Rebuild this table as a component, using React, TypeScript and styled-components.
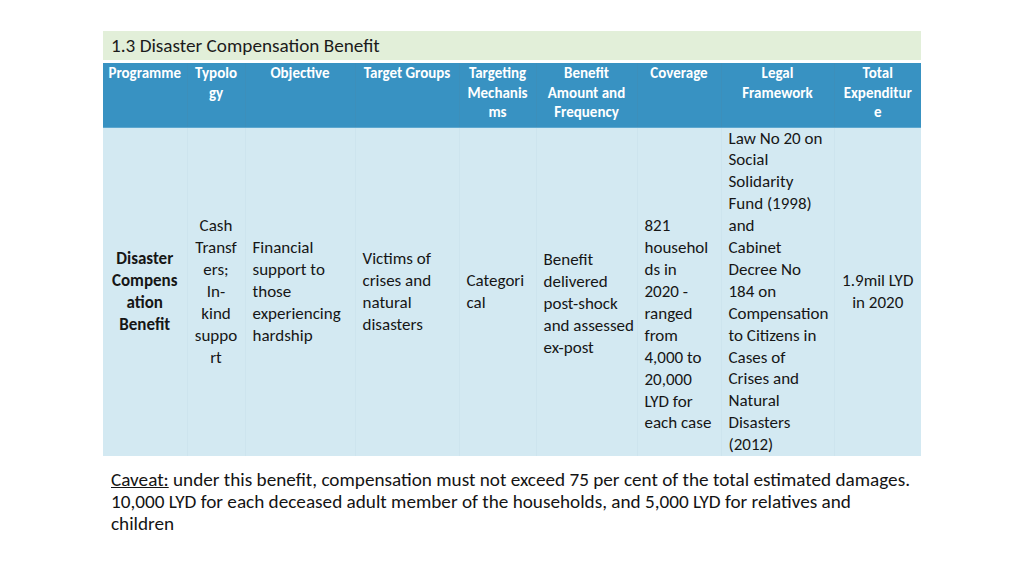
import React from "react";
import styled, { createGlobalStyle } from "styled-components";

const Global = createGlobalStyle`
  html, body { margin: 0; padding: 0; background: #ffffff; }
  body { font-family: Carlito, Lato, "Open Sans", sans-serif; color: #111; }
`;

const Page = styled.div`
  width: 818px;
  margin: 0 auto;
  padding-top: 31px;
`;

const TitleBand = styled.div`
  height: 29px;
  background: #e2efd9;
  display: flex;
  align-items: center;
  padding-left: 8px;
  font-size: 19.2px;
  color: #1b1b1b;
  margin-bottom: 3px;
`;

const Table = styled.table`
  width: 818px;
  table-layout: fixed;
  border-collapse: collapse;
`;

const HeadCell = styled.th`
  background: #3892c2;
  color: #ffffff;
  font-weight: 700;
  font-size: 15px;
  line-height: 19.5px;
  text-align: center;
  vertical-align: top;
  height: 64px;
  padding: 1px 1px 0;
  box-sizing: border-box;
  border-left: 1px solid #3c8fbb;
  border-bottom: 1px solid #5ca7cf;
  white-space: nowrap;
  &:first-child { border-left: none; }
`;

const BodyCell = styled.td<{ $align?: "left" | "center"; $bold?: boolean; $shift?: number }>`
  background: #d3e9f2;
  font-size: 17px;
  line-height: 21.9px;
  height: 327px;
  padding: ${(p) => (p.$shift ? `${p.$shift * 2}px` : "0")} 1px 0 ${(p) => (p.$align === "center" ? "1px" : "7px")};
  box-sizing: border-box;
  vertical-align: middle;
  text-align: ${(p) => p.$align ?? "left"};
  font-weight: ${(p) => (p.$bold ? 700 : 400)};
  color: #161616;
  white-space: nowrap;
  border-left: 1px solid #cde4ee;
  &:first-child { border-left: none; }
`;

const Caveat = styled.p`
  margin: 13px 0 0;
  padding-left: 8px;
  font-size: 19.2px;
  line-height: 22px;
  color: #141414;
  white-space: nowrap;
`;

const Under = styled.span`
  text-decoration: underline;
`;

const widths = [84, 58, 110, 104, 77, 101, 84, 113, 87];

const headers: string[][] = [
  ["Programme"],
  ["Typolo", "gy"],
  ["Objective"],
  ["Target Groups"],
  ["Targeting", "Mechanis", "ms"],
  ["Benefit", "Amount and", "Frequency"],
  ["Coverage"],
  ["Legal", "Framework"],
  ["Total", "Expenditur", "e"],
];

type Cell = { lines: string[]; align?: "left" | "center"; bold?: boolean; shift?: number };

const body: Cell[] = [
  { lines: ["Disaster", "Compens", "ation", "Benefit"], align: "center", bold: true },
  { lines: ["Cash", "Transf", "ers;", "In-", "kind", "suppo", "rt"], align: "center" },
  { lines: ["Financial", "support to", "those", "experiencing", "hardship"] },
  { lines: ["Victims of", "crises and", "natural", "disasters"] },
  { lines: ["Categori", "cal"] },
  { lines: ["Benefit", "delivered", "post-shock", "and assessed", "ex-post"], shift: 12 },
  {
    lines: ["821", "househol", "ds in", "2020 -", "ranged", "from", "4,000 to", "20,000", "LYD for", "each case"],
    shift: 33,
  },
  {
    lines: [
      "Law No 20 on",
      "Social",
      "Solidarity",
      "Fund (1998)",
      "and",
      "Cabinet",
      "Decree No",
      "184 on",
      "Compensation",
      "to Citizens in",
      "Cases of",
      "Crises and",
      "Natural",
      "Disasters",
      "(2012)",
    ],
  },
  { lines: ["1.9mil LYD", "in 2020"], align: "center" },
];

const Lines: React.FC<{ lines: string[] }> = ({ lines }) => (
  <>
    {lines.map((l, i) => (
      <React.Fragment key={i}>
        {i > 0 && <br />}
        {l}
      </React.Fragment>
    ))}
  </>
);

export default function App() {
  return (
    <>
      <Global />
      <Page>
        <TitleBand>1.3 Disaster Compensation Benefit</TitleBand>
        <Table>
          <colgroup>
            {widths.map((w, i) => (
              <col key={i} style={{ width: w }} />
            ))}
          </colgroup>
          <thead>
            <tr>
              {headers.map((h, i) => (
                <HeadCell key={i}>
                  <Lines lines={h} />
                </HeadCell>
              ))}
            </tr>
          </thead>
          <tbody>
            <tr>
              {body.map((c, i) => (
                <BodyCell key={i} $align={c.align} $bold={c.bold} $shift={c.shift}>
                  <Lines lines={c.lines} />
                </BodyCell>
              ))}
            </tr>
          </tbody>
        </Table>
        <Caveat>
          <Under>Caveat:</Under> under this benefit, compensation must not exceed 75 per cent of the total estimated damages.
          <br />
          10,000 LYD for each deceased adult member of the households, and 5,000 LYD for relatives and
          <br />
          children
        </Caveat>
      </Page>
    </>
  );
}
